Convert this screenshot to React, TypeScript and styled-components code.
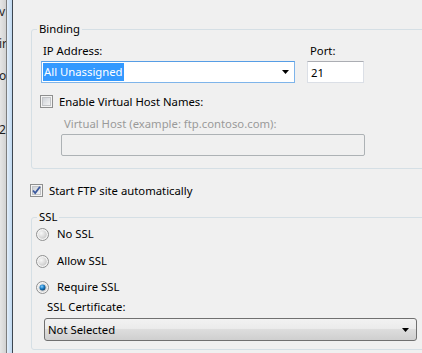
import React from "react";
import styled, { createGlobalStyle } from "styled-components";

const GlobalStyle = createGlobalStyle`
  html, body {
    margin: 0;
    padding: 0;
    background: #f0f0f0;
  }
  body {
    font-family: "Noto Sans", "Liberation Sans", sans-serif;
    font-size: 11.3px;
    color: #000;
  }
`;

const Page = styled.div`
  display: flex;
  width: 422px;
  height: 353px;
  overflow: hidden;
  background: #f0f0f0;
`;

const Edge = styled.div`
  display: flex;
  flex: none;
  height: 100%;
`;

const EdgeList = styled.div`
  width: 6px;
  overflow: hidden;
  display: flex;
  flex-direction: column;
  background: linear-gradient(to right, #e6e6e6, #d2d2d2);
  font-size: 12px;
  line-height: 16px;
  color: #1e1e1e;
`;

const EdgeItem = styled.span<{ $top: number }>`
  display: block;
  margin-top: ${({ $top }) => $top}px;
  white-space: nowrap;
  margin-left: -1px;
`;

const EdgeLine = styled.div<{ $color: string }>`
  width: 1px;
  background: ${({ $color }) => $color};
`;

const EdgeTrack = styled.div`
  width: 5px;
  background: linear-gradient(to right, #e3eefa, #bfd8f0);
`;

const Content = styled.div`
  flex: 1;
  min-width: 0;
  padding: 21px 0 0 18px;
`;

const Group = styled.fieldset<{ $pad: string }>`
  margin: 0 -40px 0 0;
  padding: ${({ $pad }) => $pad};
  border: 1px solid #d5dfe5;
  border-radius: 3px;
  min-width: 0;
`;

const Legend = styled.legend<{ $shift: number }>`
  padding: 0 2px;
  margin-left: ${({ $shift }) => $shift}px;
  line-height: 16px;
  color: #000;
`;

const FieldRow = styled.div`
  display: flex;
  gap: 12px;
`;

const Column = styled.div<{ $width: number }>`
  display: flex;
  flex-direction: column;
  width: ${({ $width }) => $width}px;
`;

const Label = styled.div<{ $disabled?: boolean; $indent?: number }>`
  line-height: 16px;
  margin: 0 0 2px ${({ $indent }) => $indent ?? 2}px;
  color: ${({ $disabled }) => ($disabled ? "#9a9a9a" : "#000")};
  white-space: nowrap;
`;

const Combo = styled.div<{ $focused?: boolean }>`
  height: 22px;
  box-sizing: border-box;
  display: flex;
  align-items: center;
  justify-content: space-between;
  padding: 0 5px 0 1px;
  background: #fff;
  border: 1px solid ${({ $focused }) => ($focused ? "#7eb4ea" : "#abadb3")};
  border-top-color: ${({ $focused }) => ($focused ? "#569de5" : "#abadb3")};
`;

const Selected = styled.span`
  background: #3399ff;
  color: #fff;
  line-height: 18px;
  padding: 0 1px;
`;

const TextBox = styled.div<{ $disabled?: boolean; $width?: number }>`
  height: 22px;
  box-sizing: border-box;
  width: ${({ $width }) => ($width ? `${$width}px` : "auto")};
  display: flex;
  align-items: center;
  padding: 0 3px;
  background: ${({ $disabled }) => ($disabled ? "#f0f0f0" : "#fff")};
  border: 1px solid ${({ $disabled }) => ($disabled ? "#adb2b5" : "#dbdfe6")};
  border-top-color: ${({ $disabled }) => ($disabled ? "#adb2b5" : "#abadb3")};
  border-radius: ${({ $disabled }) => ($disabled ? "2px" : "0")};
`;

const CheckRow = styled.label<{ $top: number; $left?: number }>`
  display: flex;
  align-items: center;
  gap: 6px;
  line-height: 17px;
  margin: ${({ $top }) => $top}px 0 0 ${({ $left }) => $left ?? 0}px;
  white-space: nowrap;
`;

const RadioRow = styled.label<{ $top: number }>`
  display: flex;
  align-items: center;
  gap: 8px;
  line-height: 16px;
  margin-top: ${({ $top }) => $top}px;
`;

const Indented = styled.div`
  padding-left: 8px;
  margin-top: 4px;
`;

const DropButton = styled.div`
  width: 373px;
  height: 23px;
  box-sizing: border-box;
  display: flex;
  align-items: center;
  justify-content: space-between;
  padding: 0 7px 0 3px;
  border: 1px solid #707070;
  border-radius: 3px;
  background: linear-gradient(to bottom, #f2f2f2 0%, #ebebeb 45%, #dddddd 50%, #cfcfcf 100%);
  margin-top: 3px;
`;

const Arrow = () => (
  <svg width="7" height="4" viewBox="0 0 7 4">
    <path d="M0 0h7L3.5 4z" fill="#000" />
  </svg>
);

const CheckBox = ({ checked }: { checked?: boolean }) => (
  <svg width="13" height="13" viewBox="0 0 13 13" style={{ flex: "none" }}>
    <defs>
      <linearGradient id="cbfill" x1="0" y1="0" x2="1" y2="1">
        <stop offset="0" stopColor="#cbcfd5" />
        <stop offset="1" stopColor="#f6f6f6" />
      </linearGradient>
    </defs>
    <rect x="0.5" y="0.5" width="12" height="12" fill="#f4f4f4" stroke="#8e8f8f" />
    <rect x="2.5" y="2.5" width="8" height="8" fill="url(#cbfill)" stroke="#c2c4c7" />
    {checked && (
      <path d="M3 6.5l2.2 2.6L10 2.8" fill="none" stroke="#3c5a9e" strokeWidth="1.8" />
    )}
  </svg>
);

const Radio = ({ checked }: { checked?: boolean }) => (
  <svg width="13" height="13" viewBox="0 0 13 13" style={{ flex: "none" }}>
    <defs>
      <radialGradient id="rdfill" cx="0.35" cy="0.35" r="0.7">
        <stop offset="0" stopColor="#f8f8f8" />
        <stop offset="1" stopColor="#cbcbcb" />
      </radialGradient>
      <radialGradient id="rddot" cx="0.4" cy="0.35" r="0.7">
        <stop offset="0" stopColor="#8fd2ff" />
        <stop offset="0.5" stopColor="#1a7fc8" />
        <stop offset="1" stopColor="#0b3a66" />
      </radialGradient>
    </defs>
    <circle cx="6.5" cy="6.5" r="6" fill="#f4f4f4" stroke="#8e8f8f" />
    <circle cx="6.5" cy="6.5" r="4.3" fill="url(#rdfill)" />
    {checked && <circle cx="6.5" cy="6.5" r="3" fill="url(#rddot)" />}
  </svg>
);

const App = () => {
  return (
    <Page>
      <GlobalStyle />
      <Edge>
        <EdgeList>
          <EdgeItem $top={4}>v</EdgeItem>
          <EdgeItem $top={16}>ir</EdgeItem>
          <EdgeItem $top={16}>o</EdgeItem>
          <EdgeItem $top={38}>2</EdgeItem>
        </EdgeList>
        <EdgeLine $color="#7d7d7d" />
        <EdgeTrack />
        <EdgeLine $color="#3d4650" />
      </Edge>
      <Content>
        <Group $pad="6px 10px 12px 9px">
          <Legend $shift={-4}>Binding</Legend>
          <FieldRow>
            <Column $width={254}>
              <Label>IP Address:</Label>
              <Combo $focused>
                <Selected>All Unassigned</Selected>
                <Arrow />
              </Combo>
            </Column>
            <Column $width={57}>
              <Label $indent={3}>Port:</Label>
              <TextBox>21</TextBox>
            </Column>
          </FieldRow>
          <CheckRow $top={10} $left={-1}>
            <CheckBox />
            Enable Virtual Host Names:
          </CheckRow>
          <Label $disabled $indent={23} style={{ marginTop: 6 }}>
            Virtual Host (example: ftp.contoso.com):
          </Label>
          <TextBox $disabled $width={304} style={{ marginLeft: 20 }} />
        </Group>
        <CheckRow $top={13} $left={-1}>
          <CheckBox checked />
          Start FTP site automatically
        </CheckRow>
        <Group $pad="1px 10px 8px 4px" style={{ marginTop: 10 }}>
          <Legend $shift={1}>SSL</Legend>
          <RadioRow $top={0}>
            <Radio />
            No SSL
          </RadioRow>
          <RadioRow $top={11}>
            <Radio />
            Allow SSL
          </RadioRow>
          <RadioRow $top={10}>
            <Radio checked />
            Require SSL
          </RadioRow>
          <Indented>
            <Label $indent={3}>SSL Certificate:</Label>
            <DropButton>
              <span>Not Selected</span>
              <Arrow />
            </DropButton>
          </Indented>
        </Group>
      </Content>
    </Page>
  );
};

export default App;
